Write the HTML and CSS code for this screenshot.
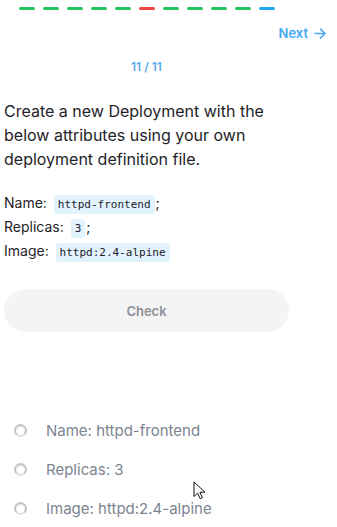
FILE: index.html
```html
<!DOCTYPE html>
<html lang="en">
<head>
  <meta charset="UTF-8" />
  <title>Quiz 11 / 11</title>
  <link rel="stylesheet" href="styles.css">
</head>
<body>
  <div class="progress">
    <span class="dash ok"></span>
    <span class="dash ok"></span>
    <span class="dash ok"></span>
    <span class="dash ok"></span>
    <span class="dash ok"></span>
    <span class="dash bad"></span>
    <span class="dash ok"></span>
    <span class="dash ok"></span>
    <span class="dash ok"></span>
    <span class="dash ok"></span>
    <span class="dash current"></span>
  </div>

  <div class="nav">
    <a class="next" href="#">Next
      <svg width="12" height="11" viewBox="0 0 12 11" fill="none" stroke="currentColor" stroke-width="1.6" stroke-linecap="round" stroke-linejoin="round">
        <path d="M1 5.5h10M6.5 1l4.5 4.5L6.5 10"/>
      </svg>
    </a>
  </div>

  <div class="quiz">
    <div class="counter">11 / 11</div>

    <p class="question">Create a new Deployment with the below attributes using your own deployment definition file.</p>

    <div class="attrs">
      <div>Name: <code>httpd-frontend</code>;</div>
      <div>Replicas: <code>3</code>;</div>
      <div>Image: <code>httpd:2.4-alpine</code></div>
    </div>

    <button class="check">Check</button>

    <ul class="options">
      <li><span class="radio"></span>Name: httpd-frontend</li>
      <li><span class="radio"></span>Replicas: 3</li>
      <li><span class="radio"></span>Image: httpd:2.4-alpine</li>
    </ul>
  </div>

  <!-- mouse pointer caught in the shot -->
  <svg class="cursor" width="13" height="19" viewBox="0 0 13 19">
    <path d="M1 1v14.5l3.6-3.4 2.6 5.6 2.2-1-2.5-5.5H12z" fill="#fff" stroke="#111" stroke-width="1" stroke-linejoin="round"/>
  </svg>
</body>
</html>
```

FILE: styles.css
```css
body {
  margin: 0;
  font-family: Inter, "Noto Sans", sans-serif;
  color: #1f2328;
  background: #fff;
  position: relative;
  min-height: 527px;
}
.progress {
  display: flex;
  gap: 8px;
  padding: 7px 0 0 19px;
}
.dash {
  width: 16px;
  height: 3px;
  border-radius: 2px;
}
.dash.ok {
  background-color: #22c55e;
}
.dash.bad {
  background-color: #ef4444;
}
.dash.current {
  background-color: #1ea7f2;
}
.nav {
  display: flex;
  justify-content: flex-end;
  padding: 15px 11px 0 0;
}
.next {
  display: flex;
  align-items: center;
  gap: 6px;
  font-size: 13px;
  font-weight: 600;
  color: #45a8f2;
  text-decoration: none;
}
.quiz {
  width: 285px;
  padding-left: 4px;
}
.counter {
  text-align: center;
  font-size: 12px;
  font-weight: 600;
  color: #5aa9ee;
  margin-top: 18px;
}
.question {
  font-size: 16px;
  line-height: 24px;
  margin: 25px 0 0 0;
  width: 275px;
}
.attrs {
  margin-top: 21px;
  font-size: 14px;
  line-height: 22px;
}
code {
  font-family: "DejaVu Sans Mono", "Liberation Mono", monospace;
  font-size: 11px;
  background-color: #e3f3fd;
  color: #1b1b2a;
  padding: 3px 4px;
  border-radius: 3px;
  margin: 0 1px 0 3px;
}
.check {
  display: block;
  width: 285px;
  height: 43px;
  margin-top: 25px;
  border: none;
  border-radius: 22px;
  background-color: #f4f4f4;
  color: #8a8f98;
  font-family: Inter, "Noto Sans", sans-serif;
  font-size: 13px;
  font-weight: 600;
}
.options {
  list-style: none;
  margin: 79px 0 0 0;
  padding: 0 0 0 10px;
}
.options li {
  display: flex;
  align-items: center;
  height: 39px;
  font-size: 15px;
  color: #7b8591;
}
.radio {
  box-sizing: border-box;
  width: 13px;
  height: 13px;
  border-radius: 50%;
  border: 2px solid #c4c4c4;
  border-bottom-color: #e2e2e2;
  box-shadow: inset 0 1px 1px rgba(0,0,0,0.12);
  background: #fff;
  margin-right: 19px;
}
.cursor {
  position: absolute;
  left: 193px;
  top: 481px;
}
```
